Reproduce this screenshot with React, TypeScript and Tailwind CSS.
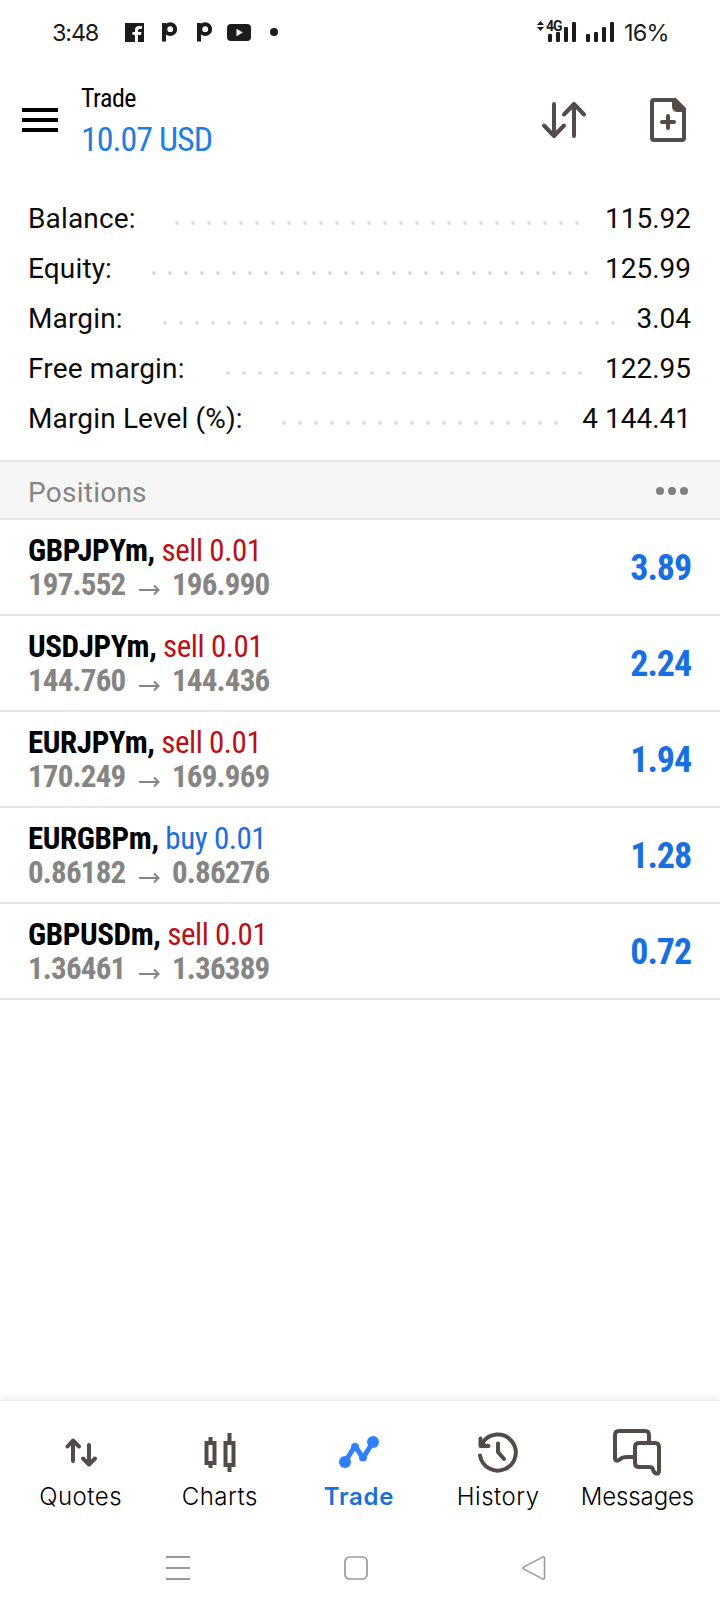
import type { ReactNode } from "react";

type Summary = { label: string; value: string; labelWidth: string; dots: number };

const summary: Summary[] = [
    { label: "Balance:", value: "115.92", labelWidth: "w-[147px]", dots: 26 },
    { label: "Equity:", value: "125.99", labelWidth: "w-[124px]", dots: 28 },
    { label: "Margin:", value: "3.04", labelWidth: "w-[135px]", dots: 29 },
    { label: "Free margin:", value: "122.95", labelWidth: "w-[198px]", dots: 23 },
    { label: "Margin Level (%):", value: "4 144.41", labelWidth: "w-[254px]", dots: 18 },
];

const positions = [
    { symbol: "GBPJPYm", side: "sell", volume: "0.01", open: "197.552", current: "196.990", profit: "3.89" },
    { symbol: "USDJPYm", side: "sell", volume: "0.01", open: "144.760", current: "144.436", profit: "2.24" },
    { symbol: "EURJPYm", side: "sell", volume: "0.01", open: "170.249", current: "169.969", profit: "1.94" },
    { symbol: "EURGBPm", side: "buy", volume: "0.01", open: "0.86182", current: "0.86276", profit: "1.28" },
    { symbol: "GBPUSDm", side: "sell", volume: "0.01", open: "1.36461", current: "1.36389", profit: "0.72" },
];

const PIcon = () => (
    <svg width="15" height="20" viewBox="0 0 15 20" fill="none" stroke="#1c1c1c">
        <path d="M0 1.5h3V20" strokeWidth="0" fill="#1c1c1c" />
        <path d="M2 1v18.5" strokeWidth="4" />
        <circle cx="8.2" cy="7.2" r="4.9" strokeWidth="4" />
    </svg>
);

const Signal = () => (
    <svg width="28" height="20" viewBox="0 0 28 20" fill="#1c1c1c">
        <rect x="0" y="12" width="4" height="8" rx="1" />
        <rect x="8" y="10" width="4" height="10" rx="1" />
        <rect x="16" y="5" width="4" height="15" rx="1" />
        <rect x="24" y="0" width="4" height="20" rx="1" />
    </svg>
);

const StatusBar = () => (
    <div className="flex h-16 items-center pl-[52px] pr-[53px] font-['Inter',sans-serif] text-[23.5px] text-[#1c1c1c]">
        <span className="w-[73px] pt-[2px] tracking-[-1.2px]">3:48</span>
        <svg width="19" height="19" viewBox="0 0 19 19">
            <path fill="#1c1c1c" d="M0 0h19v19h-6v-7h3l.5-3H13V7.500q0-1.500 1.500-1.500H17V3h-3q-4 0-4 4v2H7.500v3H10v7H0z" />
        </svg>
        <div className="ml-[18px] flex gap-5">
            <PIcon />
            <PIcon />
        </div>
        <svg className="ml-[15px]" width="24" height="17" viewBox="0 0 24 17">
            <rect width="24" height="17" rx="4" fill="#1c1c1c" />
            <path d="M9.500 4.800v7.400l6.300-3.700z" fill="#fff" />
        </svg>
        <span className="ml-[19px] size-2 rounded-full bg-[#1c1c1c]" />
        <div className="relative ml-auto flex gap-[10px]">
            <div className="absolute -left-[11px] -top-[2px] flex items-center gap-[2px]">
                <svg width="7" height="10" viewBox="0 0 7 10" fill="#1c1c1c">
                    <path d="M3.500 0 7 4H0zM3.500 10 0 6h7z" />
                </svg>
                <span className="font-['Roboto',sans-serif] text-[14px] font-bold leading-[12px] tracking-[-1px]">4G</span>
            </div>
            <Signal />
            <Signal />
        </div>
        <span className="ml-[10px] w-[43px] whitespace-nowrap pt-[2px] tracking-[-0.8px]">16%</span>
    </div>
);

const Header = () => (
    <header className="flex h-[112px] items-center pl-[22px] pr-[34px]">
        <div className="flex w-9 flex-col gap-[6px]">
            <span className="h-1 bg-black" />
            <span className="h-1 bg-black" />
            <span className="h-1 bg-black" />
        </div>
        <div className="ml-[23px] flex flex-col font-['Roboto_Condensed','Roboto',sans-serif] [font-stretch:75%]">
            <span className="text-[26px] leading-[36px] tracking-[-0.5px] text-black">Trade</span>
            <span className="pt-px text-[34px] leading-[44px] tracking-[-1px] text-[#1f7ee0]">10.07 USD</span>
        </div>
        <svg className="ml-auto" width="46" height="40" viewBox="0 0 46 40" fill="none" stroke="#534b49" strokeWidth="4" strokeLinecap="round" strokeLinejoin="round">
            <path d="M13 4v32M3 25.500l10 10.500 10-10.500" />
            <path d="M33 36V4M23 14.500 33 4l10 10.500" />
        </svg>
        <svg className="ml-[63px]" width="36" height="44" viewBox="0 0 36 44" fill="none" stroke="#534b49" strokeWidth="4" strokeLinecap="round" strokeLinejoin="round">
            <path d="M4 2h21l9 9v29q0 2-2 2H4q-2 0-2-2V4q0-2 2-2z" />
            <path d="M24 2v6q0 4 4 4h6z" fill="#534b49" />
            <path d="M18 18v12M12 24h12" />
        </svg>
    </header>
);

const SummaryRow = ({ label, value, labelWidth, dots }: Summary) => (
    <div className="flex h-[50px] items-center">
        <span className={`${labelWidth} shrink-0 whitespace-nowrap tracking-[0.15px]`}>{label}</span>
        <div className="flex gap-3 pt-2">
            {Array.from({ length: dots }, (_, i) => (
                <span key={i} className="size-1 rounded-full bg-[#dedede]" />
            ))}
        </div>
        <span className="ml-auto whitespace-nowrap">{value}</span>
    </div>
);

const tabLabel = {
    normal: "pt-px text-[24px] font-light leading-[40px] tracking-[0.5px] text-black",
    tight: "pt-px text-[24px] font-light leading-[40px] tracking-[-0.1px] text-black",
    active: "pt-px text-[24px] font-semibold leading-[40px] tracking-[0.8px] text-[#1a6fd8]",
};

const Tab = ({ label, variant = "normal", children }: { label: string; variant?: keyof typeof tabLabel; children: ReactNode }) => (
    <div className="flex flex-1 flex-col items-center">
        <svg width="52" height="48" viewBox="0 0 52 48" fill="none" stroke={variant === "active" ? "#2f80fa" : "#534b49"} strokeWidth="4" strokeLinecap="round" strokeLinejoin="round">
            {children}
        </svg>
        <span className={tabLabel[variant]}>{label}</span>
    </div>
);

const TabBar = () => (
    <nav className="flex h-[124px] border-t border-[#ececec] bg-white pl-[11px] pr-[13px] pt-[27px] font-['Inter',sans-serif] shadow-[0_-2px_8px_rgba(0,0,0,0.08)]">
        <Tab label="Quotes">
            <path d="M18 33V12.500M12.500 18.500 18 12.500l6 6" />
            <path d="M34 17v19.500M28 30.500l6 6 6-6" />
        </Tab>
        <Tab label="Charts">
            <g strokeLinecap="butt" strokeLinejoin="miter">
                <path d="M12.500 15h8v20h-8zM16.500 9v5M16.500 36v4" />
                <path d="M31.500 15h8v22h-8zM35.500 5v9M35.500 38v6" />
            </g>
        </Tab>
        <Tab label="Trade" variant="active">
            <path d="M12 34 22 18l8 12 10-16" strokeWidth="5" />
            <circle cx="12" cy="34" r="6" fill="#2f80fa" stroke="none" />
            <circle cx="22" cy="19" r="4" fill="#2f80fa" stroke="none" />
            <circle cx="30" cy="29.500" r="4" fill="#2f80fa" stroke="none" />
            <circle cx="40" cy="14" r="6" fill="#2f80fa" stroke="none" />
        </Tab>
        <Tab label="History">
            <path d="M8 27.500A18 18 0 1 0 10.500 15" />
            <path d="M8.500 10.500V18h8" />
            <path d="M8.500 12v6h6z" strokeWidth="2" fill="#534b49" />
            <path d="M26 15.500V24l6 7" />
        </Tab>
        <Tab label="Messages" variant="tight">
            <path d="M38 14V7q0-4-4-4H8Q4 3 4 7v23q0 4 4 2 3-3 8-3h7" />
            <path d="M28 15h16q4 0 4 4v24q0 3-3 2.500-2-.5-3-4-.5-2.500-4-2.500H28q-4 0-4-4V19q0-4 4-4z" />
        </Tab>
    </nav>
);

const SystemBar = () => (
    <div className="z-10 flex h-[88px] items-center gap-[154px] bg-white pl-[166px]">
        <svg width="24" height="24" viewBox="0 0 24 24" stroke="#999" strokeWidth="2">
            <path d="M0 1h24M0 12h24M0 23h24" />
        </svg>
        <svg width="24" height="24" viewBox="0 0 24 24" fill="none" stroke="#999" strokeWidth="1.700">
            <rect x="1" y="1" width="22" height="22" rx="4.500" />
        </svg>
        <svg width="24" height="24" viewBox="0 0 24 24" fill="none" stroke="#999" strokeWidth="1.500" strokeLinejoin="round">
            <path d="M1.500 11.200 20.500 1.200q2-.7 2 1.300v19q0 2-2 1.300L1.500 12.800q-1.500-.8 0-1.600z" />
        </svg>
    </div>
);

const App = () => (
    <div className="flex h-[1612px] w-[720px] flex-col overflow-hidden bg-white">
        <StatusBar />
        <Header />
        <section className="flex h-[284px] flex-col pl-7 pr-[29px] pt-[18px] font-['Roboto',sans-serif] text-[28px] text-[#0c0c0c]">
            {summary.map((row) => (
                <SummaryRow key={row.label} {...row} />
            ))}
        </section>
        <div className="flex h-[60px] items-center justify-between border-y-2 border-[#e6e6e6] bg-[#f6f6f6] pl-7 pr-8 font-['Roboto',sans-serif] text-[28px] text-[#858585]">
            <span className="pt-[6px] tracking-[0.25px]">Positions</span>
            <div className="flex gap-1 pt-[2px]">
                <span className="size-2 rounded-full bg-[#808080]" />
                <span className="size-2 rounded-full bg-[#808080]" />
                <span className="size-2 rounded-full bg-[#808080]" />
            </div>
        </div>
        <ul className="flex flex-1 flex-col font-['Roboto_Condensed','Roboto',sans-serif] [font-stretch:75%]">
            {positions.map((p) => (
                <li key={p.symbol} className="flex h-24 items-center justify-between border-b-2 border-[#e6e6e6] pl-7 pr-[29px] pt-[2px]">
                    <div className="flex flex-col text-[31px] leading-[34px]">
                        <div>
                            <span className="font-bold tracking-[-0.4px] text-black">{p.symbol}, </span>
                            <span className={p.side === "sell" ? "tracking-[-0.45px] text-[#bb1016]" : "tracking-[-0.45px] text-[#1a6fdc]"}>
                                {p.side} {p.volume}
                            </span>
                        </div>
                        <div className="flex items-center font-bold tracking-[-0.8px] text-[#858585]">
                            <span className="w-[111px]">{p.open}</span>
                            <svg className="mt-[10px]" width="21" height="12" viewBox="0 0 21 12" fill="none" stroke="#858585" strokeWidth="2">
                                <path d="M0 6h19M15 1.500 19.500 6 15 10.500" />
                            </svg>
                            <span className="ml-3">{p.current}</span>
                        </div>
                    </div>
                    <span className="text-[36px] font-bold tracking-[-1.1px] text-[#176fe2]">{p.profit}</span>
                </li>
            ))}
        </ul>
        <TabBar />
        <SystemBar />
    </div>
);

export default App;
